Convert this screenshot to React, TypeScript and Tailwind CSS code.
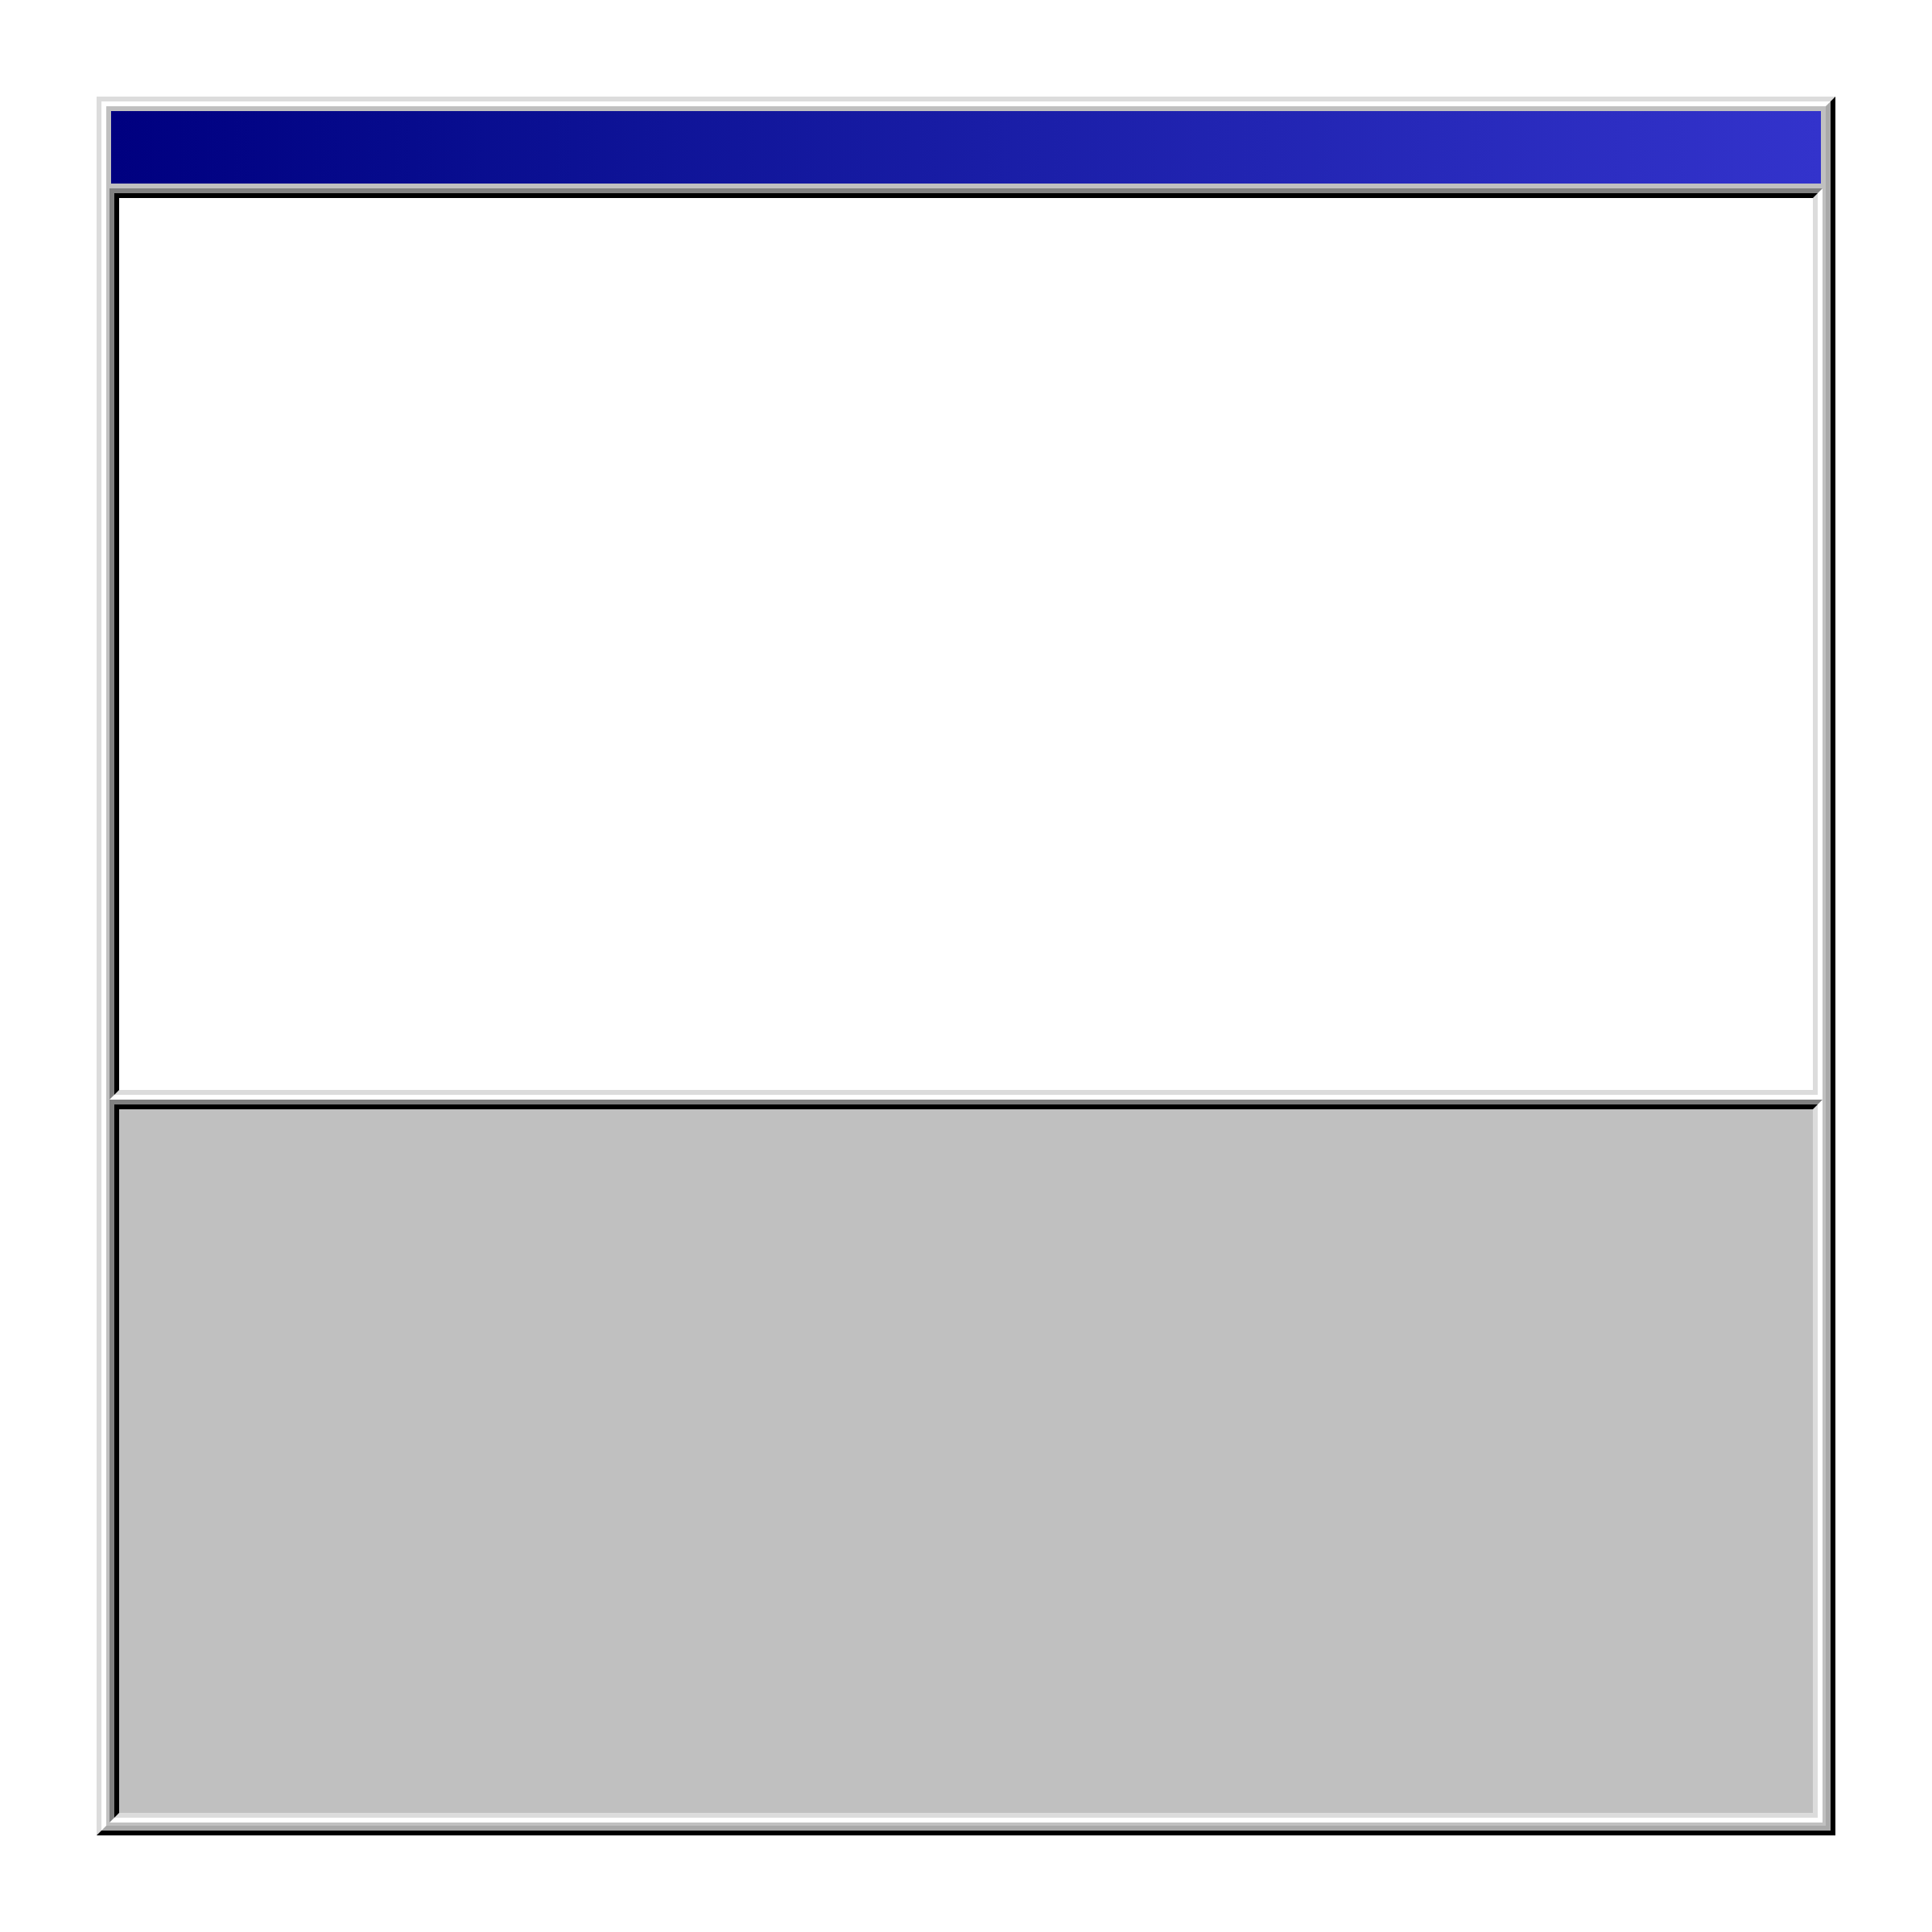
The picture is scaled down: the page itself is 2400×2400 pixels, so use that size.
import React from 'react';

// Raised (outset) frame: light top/left, dark bottom/right
const Raised: React.FC<{ className?: string; children?: React.ReactNode }> = ({ className = '', children }) => (
  <div className={`border-[6px] border-t-[#dcdcdc] border-l-[#dcdcdc] border-r-black border-b-black ${className}`}>
    <div className="h-full border-[6px] border-t-white border-l-white border-r-[#a9a9a9] border-b-[#a9a9a9]">
      {children}
    </div>
  </div>
);

// Sunken (inset) panel: dark top/left, light bottom/right
const Sunken: React.FC<{ className?: string; fill: string }> = ({ className = '', fill }) => (
  <div className={`border-[6px] border-t-[#808080] border-l-[#808080] border-r-white border-b-white ${className}`}>
    <div className={`h-full border-[6px] border-t-black border-l-black border-r-[#dcdcdc] border-b-[#dcdcdc] ${fill}`} />
  </div>
);

const App: React.FC = () => {
  return (
    <div className="w-[2400px] h-[2400px] bg-white p-[120px]">
      <Raised className="w-[2160px] h-[2160px]">
        <div className="h-full bg-[#c0c0c0] flex flex-col pb-[4px]">
          {/* Title bar */}
          <div className="h-[102px] shrink-0 border-[6px] border-[#c0c0c0] bg-gradient-to-r from-[#000080] to-[#3333cc]" />

          {/* Content panel */}
          <Sunken className="mx-[4px] h-[1132px] shrink-0" fill="bg-white" />

          {/* Status / lower panel */}
          <Sunken className="mx-[4px] flex-1" fill="bg-[#c0c0c0]" />
        </div>
      </Raised>
    </div>
  );
};

export default App;
